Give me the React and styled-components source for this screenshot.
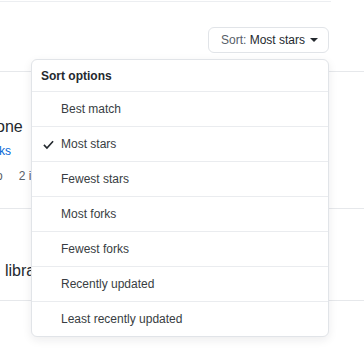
import React from 'react'
import styled, { createGlobalStyle } from 'styled-components'

const Global = createGlobalStyle`
   body {
      margin: 0;
      background: #fff;
      font-family: "Liberation Sans", Arial, sans-serif;
      color: #24292e;
   }
`;

const options = [
   'Best match',
   'Most stars',
   'Fewest stars',
   'Most forks',
   'Fewest forks',
   'Recently updated',
   'Least recently updated',
]

const Check = () => (
   <svg width="11" height="11" viewBox="0 0 12 12" fill="none" stroke="#24292e" strokeWidth="1.8">
      <path d="M1 6.5l3.3 3.3L11 2.5" />
   </svg>
)

const App = () => {
   return (
      <Page>
         <Global />
         <TopRule />
         <Toolbar>
            <SortWrap>
               <SortButton>
                  <Muted>Sort:</Muted>&nbsp;Most stars<Caret />
               </SortButton>
               <Menu>
                  <MenuHeader>Sort options</MenuHeader>
                  {
                     options.map((o) => {
                        return (
                           <Item key={o}>
                              <CheckSlot>{o === 'Most stars' && <Check />}</CheckSlot>
                              {o}
                           </Item>
                        )
                     })
                  }
               </Menu>
            </SortWrap>
         </Toolbar>
         <List>
            <Repo height={137}>
               <RepoTitle>one</RepoTitle>
               <RepoLink>ks</RepoLink>
               <RepoMeta><span>o</span><span>2 i</span></RepoMeta>
            </Repo>
            <Repo height={92}>
               <RepoDesc>libra</RepoDesc>
            </Repo>
         </List>
      </Page>
   )
}

const Page = styled.div`
   width: 364px;
   height: 349px;
   overflow: hidden;
   position: relative;
`;

const TopRule = styled.div`
   margin-top: 1px;
   width: 331px;
   border-top: 1px solid #eceef1;
`;

const Toolbar = styled.div`
   display: flex;
   justify-content: flex-end;
   padding: 25px 35px 0 0;
`;

const SortWrap = styled.div`
   position: relative;
`;

const SortButton = styled.div`
   display: flex;
   align-items: center;
   width: 121px;
   box-sizing: border-box;
   height: 26px;
   padding: 0 0 0 12px;
   border: 1px solid #e1e4e8;
   border-radius: 6px;
   font-size: 12px;
   color: #24292e;
   white-space: nowrap;
`;

const Muted = styled.span`
   color: #586069;
`;

const Caret = styled.span`
   width: 0;
   height: 0;
   margin-left: 5px;
   border-left: 4px solid transparent;
   border-right: 4px solid transparent;
   border-top: 4px solid #24292e;
`;

const Menu = styled.div`
   position: absolute;
   right: 0;
   top: 32px;
   width: 296px;
   background: #fff;
   border: 1px solid #e1e4e8;
   border-radius: 6px;
   box-shadow: 0 3px 10px rgba(27, 31, 35, 0.08);
   z-index: 2;
`;

const MenuHeader = styled.div`
   height: 31px;
   display: flex;
   align-items: center;
   padding-left: 9px;
   font-size: 12px;
   font-weight: bold;
   color: #24292e;
`;

const Item = styled.div`
   height: 34px;
   display: flex;
   align-items: center;
   border-top: 1px solid #eaecef;
   font-size: 12px;
   color: #383d42;
`;

const CheckSlot = styled.span`
   width: 29px;
   padding-left: 11px;
   box-sizing: border-box;
   display: flex;
   align-items: center;
`;

const List = styled.div`
   margin-top: 18px;
   border-top: 1px solid #e6e8eb;
`;

const Repo = styled.div`
   height: ${props => props.height}px;
   border-bottom: 1px solid #e6e8eb;
   padding-top: ${props => props.height > 100 ? 45 : 50}px;
   box-sizing: border-box;
`;

const RepoTitle = styled.div`
   font-size: 16px;
   line-height: 20px;
   margin-left: -4px;
`;

const RepoLink = styled.div`
   font-size: 12px;
   line-height: 16px;
   margin-top: 6px;
   margin-left: -1px;
   color: #0366d6;
`;

const RepoMeta = styled.div`
   display: flex;
   gap: 16px;
   font-size: 12px;
   line-height: 16px;
   margin-top: 9px;
   margin-left: -4px;
   color: #586069;
`;

const RepoDesc = styled.div`
   font-size: 16px;
   line-height: 20px;
   margin-left: 5px;
   margin-top: 2px;
`;

export default App
